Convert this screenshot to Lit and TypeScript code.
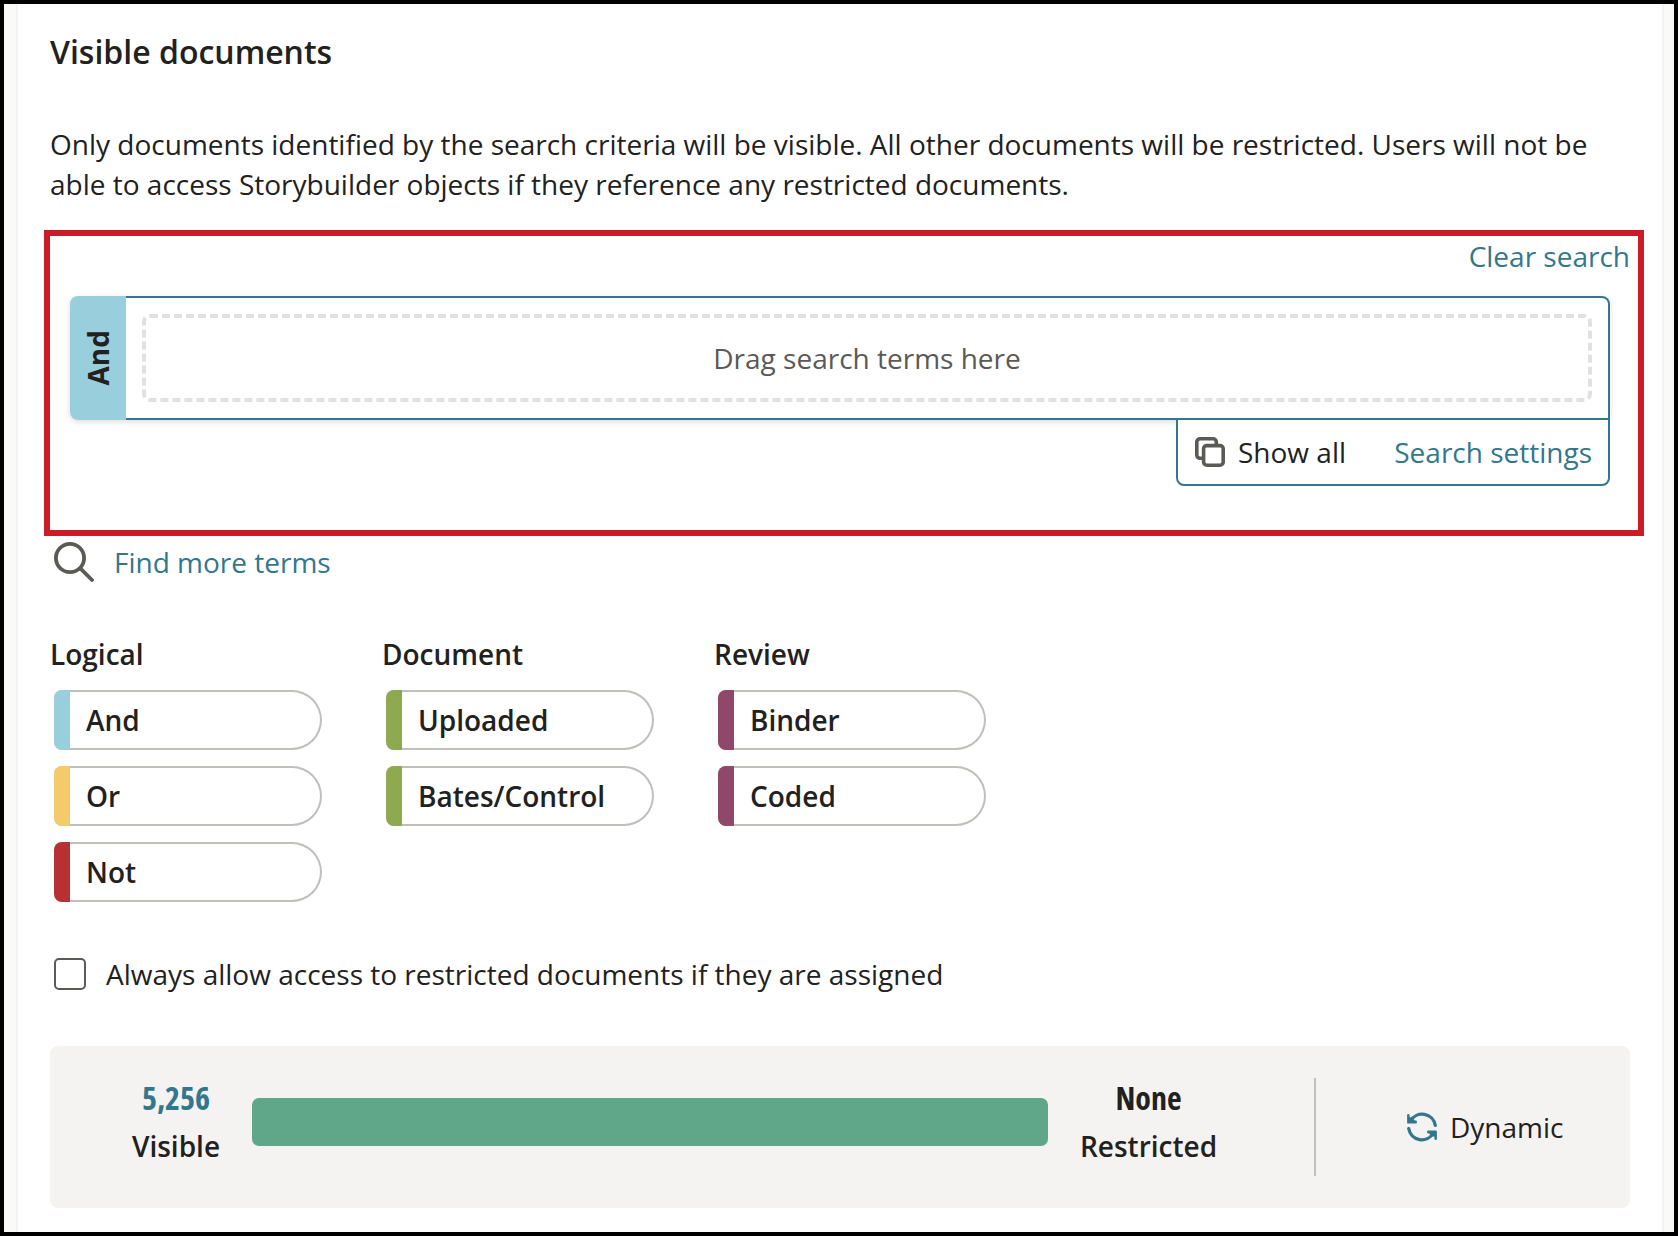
import { LitElement, html, css, svg } from "lit";
import { customElement, property } from "lit/decorators.js";

@customElement("term-pill")
class TermPill extends LitElement {
  @property() label = "";
  @property() tone = "";
  static styles = css`
    :host { display: block; }
    .pill {
      box-sizing: border-box; display: flex; width: 268px; height: 60px;
      border: 2px solid #bfbfbb; border-left: 0; border-radius: 8px 30px 30px 8px;
      background: #fff;
    }
    .stripe { flex: none; width: 16px; margin: -2px 0; border-radius: 8px 0 0 8px; }
    .and { background: #99cedc; }
    .or { background: #f4cb6a; }
    .not { background: #b73033; }
    .document { background: #8eaa50; }
    .review { background: #8f4869; }
    .label { padding-left: 16px; font-weight: 600; line-height: 56px; }
  `;
  render() {
    return html`<div class="pill"><span class="stripe ${this.tone}"></span><span class="label">${this.label}</span></div>`;
  }
}

const copyIcon = svg`<g fill="none" stroke="#5b5a56" stroke-width="3.6" stroke-linejoin="round">
  <rect x="8.6" y="8.6" width="19.6" height="19.6" rx="3.2"/>
  <path d="M7.5 21.3H5a3.2 3.2 0 0 1-3.2-3.2V5A3.2 3.2 0 0 1 5 1.8h13.1A3.2 3.2 0 0 1 21.3 5v2.5"/></g>`;

const syncIcon = svg`<g fill="none" stroke="#32778d" stroke-width="3.3" stroke-linecap="round">
  <path d="M3.6 9A13.3 13.3 0 0 1 28.3 13.4"/><path d="M1.7 16.6A13.3 13.3 0 0 0 26.4 21"/></g>
  <g fill="#32778d" stroke="#32778d" stroke-width="2.4" stroke-linejoin="round">
  <path d="M1.3 3.1V10.4h7.4V9.8H7.6L4.6 7 1.6 6.2Z"/><path d="M28.7 26.9V19.6h-7.4v.6h1.1L25.4 23l3 .8Z"/></g>`;

const groups = [
  { title: "Logical", terms: [["And", "and"], ["Or", "or"], ["Not", "not"]] },
  { title: "Document", terms: [["Uploaded", "document"], ["Bates/Control", "document"]] },
  { title: "Review", terms: [["Binder", "review"], ["Coded", "review"]] },
];

@customElement("app-root")
class AppRoot extends LitElement {
  static styles = css`
    :host {
      display: block; box-sizing: border-box; width: 1678px; height: 1236px;
      border: 4px solid #000; background: #fafaf8; padding: 0 10px 0 12px; overflow: hidden;
      font: 28px/40px "Open Sans", sans-serif; color: #22211e;
    }
    * { box-sizing: border-box; }
    .panel { height: 1228px; background: #fff; border: solid #f3f3f2; border-width: 0 2px; padding: 27px 30px 0 32px; display: flex; flex-direction: column; }
    h1 { margin: 0; font-size: 32px; line-height: 42px; font-weight: 600; }
    .intro { margin: 51px 0 0; width: 1580px; white-space: nowrap; }
    .link { color: #32778d; }
    .search { width: 1600px; height: 306px; margin: 26px 0 0 -6px; border: 6px solid #ca1c26; padding: 0 8px 0 20px; display: flex; flex-direction: column; flex: none; }
    .clear { align-self: flex-end; }
    .query { display: flex; width: 1540px; height: 124px; margin-top: 20px; border-radius: 8px; box-shadow: 0 2px 6px #0002; flex: none; }
    .op { width: 56px; background: #99cedc; border-radius: 8px 0 0 8px; display: flex; align-items: center; justify-content: center; }
    .op span { writing-mode: vertical-rl; transform: rotate(180deg); font-weight: 700; line-height: 56px; }
    .box { flex: 1; border: 2px solid #32778d; border-left: 0; border-radius: 0 8px 0 0; padding: 16px; background: #fff; }
    .drop { height: 88px; border: 4px dashed #e2e1df; border-radius: 8px; text-align: center; line-height: 80px; color: #5b5a56; }
    .settings { flex: none; width: 434px; height: 68px; margin: -2px 0 0 1106px; border: 2px solid #32778d; border-radius: 0 0 8px 8px; display: flex; align-items: center; padding: 0 16px 0 17px; background: #fff; }
    .settings svg { flex: none; margin-right: 13px; }
    .settings .link { margin-left: auto; }
    .find { display: flex; align-items: center; gap: 20px; height: 40px; margin: 6px 0 0 4px; }
    .groups { display: grid; grid-template-columns: repeat(3, 332px); margin-top: 52px; }
    .group h2 { margin: 0 0 16px; font-size: 28px; line-height: 40px; font-weight: 600; }
    .pills { display: flex; flex-direction: column; gap: 16px; margin-left: 4px; }
    .allow { display: flex; align-items: center; gap: 20px; height: 40px; margin: 52px 0 0 4px; }
    .check { width: 32px; height: 32px; border: 2px solid #5b5a56; border-radius: 5px; }
    .stats { display: flex; align-items: center; width: 1580px; height: 162px; margin-top: 52px; background: #f5f3f2; border-radius: 8px; padding-left: 50px; }
    .stat { width: 152px; text-align: center; font-weight: 600; margin-top: -8px; }
    .stat .num { font-size: 32px; font-weight: 700; font-stretch: 75%; line-height: 46px; }
    .stat .name { line-height: 50px; }
    .bar { width: 796px; height: 48px; margin-top: -10px; border-radius: 7px; background: #60a688; }
    .restricted { width: 201px; }
    .rule { width: 2px; height: 98px; background: #bfbfbb; margin-left: 65px; }
    .mode { display: flex; align-items: center; gap: 13px; margin-left: 91px; }
    svg { display: block; }
  `;
  render() {
    return html`<main class="panel">
      <h1>Visible documents</h1>
      <p class="intro">Only documents identified by the search criteria will be visible. All other documents will be restricted. Users will not be<br>able to access Storybuilder objects if they reference any restricted documents.</p>
      <section class="search">
        <span class="link clear">Clear search</span>
        <div class="query">
          <div class="op"><span>And</span></div>
          <div class="box"><div class="drop">Drag search terms here</div></div>
        </div>
        <div class="settings">
          <svg width="30" height="30" viewBox="0 0 30 30">${copyIcon}</svg>
          <span>Show all</span><span class="link">Search settings</span>
        </div>
      </section>
      <div class="find">
        <svg width="40" height="40" viewBox="0 0 40 40"><g fill="none" stroke="#5b5a56" stroke-width="3.8" stroke-linecap="round"><circle cx="16" cy="16" r="14.1"/><path d="M26.3 26.3 38 38"/></g></svg>
        <span class="link">Find more terms</span>
      </div>
      <section class="groups">
        ${groups.map(g => html`<div class="group"><h2>${g.title}</h2><div class="pills">
          ${g.terms.map(([label, tone]) => html`<term-pill label=${label} tone=${tone}></term-pill>`)}
        </div></div>`)}
      </section>
      <div class="allow"><span class="check"></span><span>Always allow access to restricted documents if they are assigned</span></div>
      <section class="stats">
        <div class="stat"><div class="num link">5,256</div><div class="name">Visible</div></div>
        <div class="bar"></div>
        <div class="stat restricted"><div class="num">None</div><div class="name">Restricted</div></div>
        <div class="rule"></div>
        <div class="mode"><svg width="30" height="30" viewBox="0 0 30 30">${syncIcon}</svg><span>Dynamic</span></div>
      </section>
    </main>`;
  }
}
